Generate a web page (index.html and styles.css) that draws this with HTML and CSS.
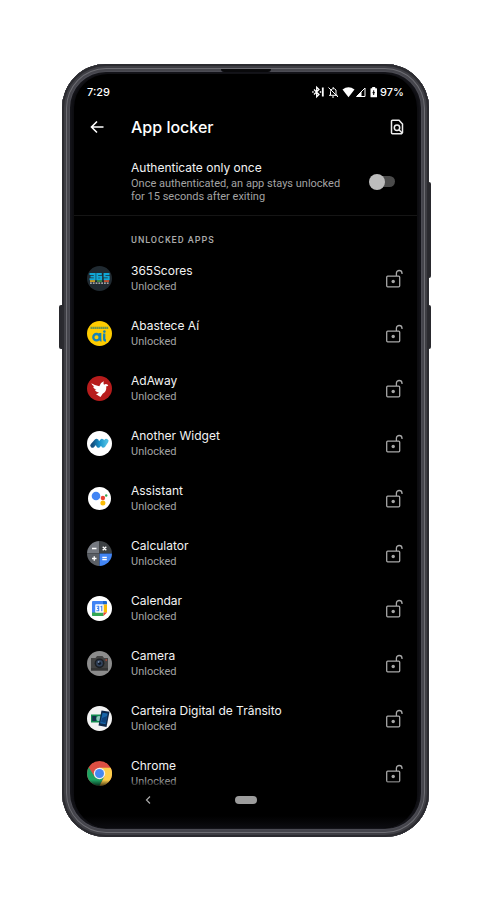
FILE: index.html
```html
<!DOCTYPE html>
<html lang="en">
<head>
<meta charset="utf-8">
<meta name="viewport" content="width=device-width, initial-scale=1">
<title>App locker</title>
<link rel="stylesheet" href="styles.css">
</head>
<body>
<svg class="defs" aria-hidden="true">
  <symbol id="unlocked" viewBox="0 0 18 20">
    <rect x="1.7" y="7.2" width="13" height="10.6" rx="1" fill="none" stroke="currentColor" stroke-width="1.3"/>
    <path d="M11.4 7V4.3a2.8 2.8 0 0 1 5.6 0v.7" fill="none" stroke="currentColor" stroke-width="1.3"/>
    <circle cx="8.2" cy="12.5" r="1.7" fill="currentColor"/>
  </symbol>
</svg>
<div class="phone">
  <main class="screen">
    <div class="status">
      <span class="clock">7:29</span>
      <svg class="status-icons" viewBox="0 0 66 14" aria-hidden="true" fill="none" stroke="#fff">
        <path d="M2 4.500l5 5-2.300 2.300V2.200L7 4.500l-5 5" stroke-width="1.300"/>
        <path d="M7.800 7h1.400M.2 7h1.400" stroke-width="1.500"/>
        <path d="M10.800 2.500v9" stroke-width="1.800"/>
        <path d="M18.500 10V6.500a3 3 0 0 1 5.500-1.500V10M17 10.300h8.500M20 12h2M21.200 2v1.500M16.500 2.500l9.500 9.500" stroke-width="1"/>
        <path d="M30.500 4.600q6-4.600 12 0L36.500 12.200z" fill="#fff" stroke="none"/>
        <path d="M44.500 11.500l8.500-8.500v8.500z"/><path d="M44.500 11.500l5-5v5z" fill="#fff" stroke="none"/>
        <path d="M59 3.200h1.200V2h3v1.200h1.300a.5.5 0 0 1 .5.500v8a.5.500 0 0 1-.5.500h-5.500a.5.500 0 0 1-.5-.5v-8a.5.500 0 0 1 .5-.500z" fill="#fff" stroke="none"/>
        <path d="M61.700 5.300v4.700M60.500 7.700h2.400" stroke="#000" stroke-width="1"/>
      </svg>
      <span>97%</span>
    </div>
    <header class="toolbar">
      <button class="icon-button" type="button" aria-label="Back">
        <svg viewBox="0 0 18 18" class="back"><path d="M15.500 9H3.500M9 3.500L3.500 9 9 14.500" fill="none" stroke="#fff" stroke-width="1.600"/></svg>
      </button>
      <h1>App locker</h1>
      <button class="icon-button find-button" type="button" aria-label="Search apps">
        <svg viewBox="0 0 14 16" class="find" fill="none" stroke="#eee" stroke-width="1.500"><path d="M12.500 13.500V5L9 1.200H2.500a1 1 0 0 0-1 1v11.600a1 1 0 0 0 1 1h9z"/><circle cx="7" cy="8.700" r="2.700"/><path d="M9 10.700l3.500 3.500"/></svg>
      </button>
    </header>
    <label class="setting">
      <span>
        <span class="title">Authenticate only once</span>
        <span class="detail">Once authenticated, an app stays unlocked<br>for 15 seconds after exiting</span>
      </span>
      <input class="switch" type="checkbox" role="switch">
    </label>
    <h2>Unlocked apps</h2>
    <ul class="apps">
      <li>
        <svg class="logo" viewBox="0 0 25 25"><circle cx="12.500" cy="12.500" r="12.500" fill="#202a31"/><g fill="none" stroke="#10a7d6" stroke-width="1.900"><path d="M2.500 8h5.200v5.300H2.500M3.500 10.600h4M14.800 8h-4.600v5.300h4v-2.600h-4M22.500 8h-5v2.600h4.200v2.700h-5"/></g><path d="M3 14.300h5v1.500H3z" fill="#f0b51d"/><path d="M10 14.300h5v1.500h-5z" fill="#3a9d45"/><path d="M17 14.300h5v1.500h-5z" fill="#e8572b"/><path d="M3 17.200h19" stroke="#ccc" stroke-width="1.300" stroke-dasharray="1.800 1"/></svg>
        <div><span class="title">365Scores</span><span class="detail">Unlocked</span></div>
        <button class="icon-button" type="button" aria-label="Lock 365Scores"><svg class="lock"><use href="#unlocked"/></svg></button>
      </li>
      <li>
        <svg class="logo" viewBox="0 0 25 25"><circle cx="12.500" cy="12.500" r="12.500" fill="#fc0"/><path d="M3.500 6.800h18" stroke="#6c9550" stroke-width="2.200" stroke-dasharray="1.700 .3"/><g fill="none" stroke="#1681b8" stroke-width="2.300"><circle cx="9.500" cy="16.200" r="3.200"/><path d="M13.200 12v6.500q0 1 1.300 1M17.200 12.500v5.500q0 1.500 1.800 1.500"/></g><circle cx="17.400" cy="10.600" r="1.300" fill="#1681b8"/></svg>
        <div><span class="title">Abastece Aí</span><span class="detail">Unlocked</span></div>
        <button class="icon-button" type="button" aria-label="Lock Abastece Aí"><svg class="lock"><use href="#unlocked"/></svg></button>
      </li>
      <li>
        <svg class="logo" viewBox="0 0 25 25"><circle cx="12.500" cy="12.500" r="12.500" fill="#b71c1c"/><path d="M4.300 7.300Q8.500 9.800 12.300 10.300 13.500 6.500 16.800 5.300 16 7.500 17 8.800q1.700-1.600 3.500-.3l.8 1.500-2 .3c.3 4-1 6.200-3.600 7.400L13.500 21 9 18.300l3-1.600Q8.500 16 7.700 13.800l1.800-.2Q6.500 12.500 6 10.700l1.300-.1Q4.800 9.200 4.300 7.300z" fill="#fff"/></svg>
        <div><span class="title">AdAway</span><span class="detail">Unlocked</span></div>
        <button class="icon-button" type="button" aria-label="Lock AdAway"><svg class="lock"><use href="#unlocked"/></svg></button>
      </li>
      <li>
        <svg class="logo" viewBox="0 0 25 25"><defs><linearGradient id="aw"><stop stop-color="#164f7e"/><stop offset=".5" stop-color="#1591ca"/><stop offset="1" stop-color="#4bbbe0"/></linearGradient></defs><circle cx="12.500" cy="12.500" r="12.500" fill="#fff"/><path d="M5.500 14.500L9.500 10l2 4.500 3.500-4.500 1.300 4.500 3-4.500" fill="none" stroke="url(#aw)" stroke-width="4.400" stroke-linecap="round" stroke-linejoin="round"/></svg>
        <div><span class="title">Another Widget</span><span class="detail">Unlocked</span></div>
        <button class="icon-button" type="button" aria-label="Lock Another Widget"><svg class="lock"><use href="#unlocked"/></svg></button>
      </li>
      <li>
        <svg class="logo" viewBox="0 0 25 25"><circle cx="12.500" cy="12.500" r="11.500" fill="#fff"/><circle cx="9" cy="10" r="4.300" fill="#4285f4"/><circle cx="15.900" cy="12" r="2.200" fill="#ea4335"/><circle cx="15.900" cy="17" r="2.500" fill="#fbbc04"/><circle cx="19.200" cy="9.500" r="1.200" fill="#34a853"/></svg>
        <div><span class="title">Assistant</span><span class="detail">Unlocked</span></div>
        <button class="icon-button" type="button" aria-label="Lock Assistant"><svg class="lock"><use href="#unlocked"/></svg></button>
      </li>
      <li>
        <svg class="logo" viewBox="0 0 25 25"><path d="M12.500 12.500H0A12.500 12.500 0 0 1 12.500 0z" fill="#757980"/><path d="M12.500 12.500V0A12.500 12.500 0 0 1 25 12.500z" fill="#3c4043"/><path d="M12.500 12.500V25A12.500 12.500 0 0 1 0 12.500z" fill="#5b5f65"/><path d="M12.500 12.500H25A12.500 12.500 0 0 1 12.500 25z" fill="#4285f4"/><path d="M5 7.500h4.500M15.700 5.700l3.600 3.600M19.300 5.700l-3.600 3.600M5 17.500h4.500M7.250 15.250v4.500M15.300 16.500h4.500M15.300 18.700h4.500" stroke="#fff" stroke-width="1.300"/></svg>
        <div><span class="title">Calculator</span><span class="detail">Unlocked</span></div>
        <button class="icon-button" type="button" aria-label="Lock Calculator"><svg class="lock"><use href="#unlocked"/></svg></button>
      </li>
      <li>
        <svg class="logo" viewBox="0 0 25 25"><circle cx="12.500" cy="12.500" r="12.500" fill="#fff"/><path d="M5 6a1 1 0 0 1 1-1h10v3.500H8.500V20H6a1 1 0 0 1-1-1z" fill="#4285f4"/><path d="M16 5h3a1 1 0 0 1 1 1v2.500h-4z" fill="#1967d2"/><path d="M16.500 8.500H20v8h-3.500z" fill="#fbbc04"/><path d="M5 16.500h11.500V20H6a1 1 0 0 1-1-1z" fill="#34a853"/><path d="M16.500 16.500H20L16.500 20z" fill="#ea4335"/><path d="M8.500 8.500h8v8h-8z" fill="#fff"/><path d="M9.500 10.300h2.200v4.400H9.300M10 12.400h1.700M13.500 10.800l1.300-.5v5" fill="none" stroke="#4285f4" stroke-width="1.100"/></svg>
        <div><span class="title">Calendar</span><span class="detail">Unlocked</span></div>
        <button class="icon-button" type="button" aria-label="Lock Calendar"><svg class="lock"><use href="#unlocked"/></svg></button>
      </li>
      <li>
        <svg class="logo" viewBox="0 0 25 25"><circle cx="12.500" cy="12.500" r="12.500" fill="#8c8c8c"/><path d="M4 7h4.500l1.500-2h5.500l1.500 2h4v12.500H4z" fill="#424242"/><path d="M4 17h17v2.500H4z" fill="#333"/><circle cx="12.500" cy="12.300" r="4.900" fill="#1d2024"/><circle cx="12.500" cy="12.300" r="3.300" fill="#33435c"/><circle cx="12.500" cy="12.300" r="1.600" fill="#121a26"/><circle cx="11.700" cy="11" r=".8" fill="#9eb3d0"/><circle cx="19.200" cy="9" r=".8" fill="#d84a35"/></svg>
        <div><span class="title">Camera</span><span class="detail">Unlocked</span></div>
        <button class="icon-button" type="button" aria-label="Lock Camera"><svg class="lock"><use href="#unlocked"/></svg></button>
      </li>
      <li>
        <svg class="logo" viewBox="0 0 25 25"><circle cx="12.500" cy="12.500" r="12.500" fill="#f2f2f2"/><path d="M4 8.500h12v8H4z" fill="#128b50"/><path d="M5.200 10h4v5h-4z" fill="#15304c"/><circle cx="12" cy="12.500" r="2.600" fill="#8cc8bb"/><path d="M14.500 4.500l8 1.200L19.500 21l-8-1.600z" fill="#0c2749"/><path d="M15.500 6.700l5.200.8-2.200 10.700-5.300-1z" fill="#1765a8"/><path d="M15 12l5-2-1.500 7-4.500-1z" fill="#0c417b"/></svg>
        <div><span class="title">Carteira Digital de Trânsito</span><span class="detail">Unlocked</span></div>
        <button class="icon-button" type="button" aria-label="Lock Carteira Digital de Trânsito"><svg class="lock"><use href="#unlocked"/></svg></button>
      </li>
      <li>
        <svg class="logo" viewBox="0 0 25 25"><circle cx="12.500" cy="12.500" r="12.500" fill="#dd4f43"/><path d="M1.700 6.300A12.500 12.500 0 0 0 12.500 25l5-9.600-5 2.800-5-2.800z" fill="#1da362"/><path d="M12.500 6.800h11.200A12.500 12.500 0 0 1 12.500 25l5-9.600z" fill="#fdce4b"/><circle cx="12.500" cy="12.500" r="5.700" fill="#f1f1f1"/><circle cx="12.500" cy="12.500" r="4.500" fill="#4688f1"/></svg>
        <div><span class="title">Chrome</span><span class="detail">Unlocked</span></div>
        <button class="icon-button" type="button" aria-label="Lock Chrome"><svg class="lock"><use href="#unlocked"/></svg></button>
      </li>
    </ul>
    <nav class="navbar">
      <button class="icon-button" type="button" aria-label="Go back"><svg class="chevron" viewBox="0 0 8 10"><path d="M6 1.500L2.500 5 6 8.500" fill="none" stroke="#aaa" stroke-width="1.200"/></svg></button>
      <button class="home" type="button" aria-label="Home"></button>
    </nav>
  </main>
  <span class="earpiece"></span>
  <span class="key key-left"></span>
  <span class="key key-power"></span>
  <span class="key key-right"></span>
</div>
</body>
</html>
```
FILE: styles.css
```css
* { box-sizing: border-box; }
body {
  margin: 0;
  padding: 64px 60px 63px 62px;
  background: #fff;
  color: #f1f1f1;
  font-family: Roboto, "Liberation Sans", sans-serif;
}
.defs { display: none; }
.phone {
  position: relative;
  padding: 10px 12px 9px;
  border-radius: 44px;
  background: #0c0c10;
  box-shadow:
    inset 0 0 0 2px #2b2b30,
    inset 0 0 0 4px #3e3e44,
    inset 0 0 0 5px #6c6c72,
    inset 0 0 0 7px #45454c,
    inset 0 0 0 8px #4c4c54,
    inset 0 0 3px 10px #16161b;
}
.screen {
  position: relative;
  padding: 2px 0 27px;
  border-radius: 34px;
  background: #000;
  overflow: hidden;
}
.earpiece {
  position: absolute;
  top: 5px;
  left: calc(50% - 25px);
  width: 50px;
  height: 3px;
  border-radius: 0 0 3px 3px;
  background: #09090b;
}
.key {
  position: absolute;
  width: 3px;
  height: 44px;
  top: 241px;
  background: #29292e;
}
.key-left { left: -3px; border-radius: 2px 0 0 2px; }
.key-right, .key-power { right: -2px; border-radius: 0 2px 2px 0; }
.key-power { top: 118px; height: 96px; }
.status {
  display: flex;
  align-items: center;
  height: 32px;
  padding: 0 13px;
  color: #fff;
  font: 500 11px/16px Inter, sans-serif;
}
.clock { flex: 1; }
.status-icons { width: 66px; height: 14px; margin-right: 2px; }
.icon-button {
  display: flex;
  align-items: center;
  justify-content: center;
  padding: 0;
  border: 0;
  background: none;
  color: #a8a8a8;
}
.toolbar, .apps li {
  display: grid;
  grid-template-columns: 25px 1fr 20px;
  column-gap: 19px;
  align-items: center;
  padding: 0 13px;
}
.toolbar { height: 38px; }
.back { width: 18px; height: 18px; margin-right: 6px; }
.find { width: 14px; height: 16px; }
.find-button { justify-content: flex-end; }
h1 {
  margin: 0;
  font: 500 16px/24px Inter, sans-serif;
  color: #fff;
}
.title, .detail { display: block; }
.title { font: 400 12px/16px Inter, sans-serif; color: #f3f3f3; }
.detail { font-size: 11px; line-height: 15px; color: #a3a3a3; }
.setting {
  display: flex;
  align-items: center;
  justify-content: space-between;
  padding: 14px 22px 12px 57px;
  border-bottom: 1px solid #151515;
}
.setting .detail { padding-top: 1px; line-height: 13px; }
.switch {
  appearance: none;
  display: grid;
  align-items: center;
  width: 26px;
  height: 16px;
  margin: 0;
}
.switch::before, .switch::after { content: ""; grid-area: 1 / 1; }
.switch::before { height: 11px; margin-left: 2px; border-radius: 6px; background: #4b4b4b; }
.switch::after { width: 16px; height: 16px; border-radius: 50%; background: #bdbdbd; }
.switch:checked::after { justify-self: end; }
h2 {
  margin: 0;
  padding: 16px 57px 3px;
  font-size: 9px;
  font-weight: 500;
  line-height: 16px;
  letter-spacing: 1px;
  text-transform: uppercase;
  color: #aaa;
}
.apps { margin: 0; padding: 0; list-style: none; }
.apps li { height: 55px; }
.logo { width: 25px; height: 25px; }
.lock { width: 18px; height: 20px; }
.navbar {
  position: absolute;
  inset: auto 0 0;
  display: grid;
  grid-template-columns: 1fr 22px 1fr;
  gap: 83px;
  align-items: start;
  height: 48px;
  padding-top: 15px;
  background: linear-gradient(transparent, #000 8px, #000 36px, #0c0c10);
}
.navbar .icon-button { justify-self: end; }
.chevron { width: 8px; height: 10px; }
.home {
  width: 22px;
  height: 8px;
  margin-top: 1px;
  padding: 0;
  border: 0;
  border-radius: 4px;
  background: #9c9c9c;
}
```
